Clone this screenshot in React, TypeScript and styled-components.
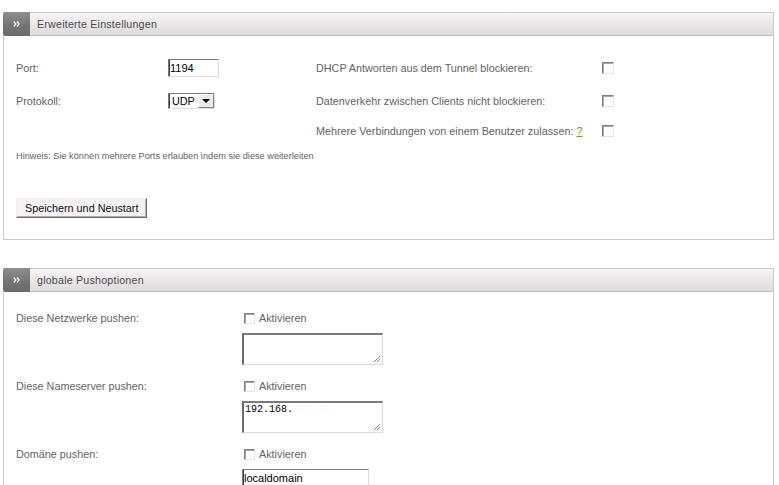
import React from "react";
import styled, { createGlobalStyle } from "styled-components";

const GlobalStyle = createGlobalStyle`
	html, body {
		margin: 0;
		padding: 0;
		background: #ffffff;
	}
	body {
		font-family: "Liberation Sans", Arial, sans-serif;
		font-size: 10.8px;
		color: #636363;
	}
`;

const Page = styled.div`
	padding: 12px 5px 0 3px;
	width: 771px;
`;

const Panel = styled.section`
	border-left: 1px solid #c8c8c8;
	border-right: 1px solid #c8c8c8;
	border-bottom: 1px solid #c8c8c8;
	margin-bottom: 28px;
`;

const PanelHeader = styled.header`
	display: flex;
	align-items: stretch;
	height: 22px;
	margin: 0 -1px;
	border: 1px solid #c8c8c8;
	border-bottom-color: #bcbcbc;
	background: linear-gradient(#f8f4f7, #e9e6e8 55%, #dedadd);
`;

const HeaderTab = styled.span`
	display: flex;
	align-items: center;
	justify-content: center;
	width: 27px;
	margin: -1px 0 -1px -1px;
	border-radius: 3px 0 0 3px;
	background: linear-gradient(#8e8e8e, #737373 60%, #6a6a6a);
`;

const HeaderTitle = styled.h2`
	margin: 0;
	padding-left: 7px;
	display: flex;
	align-items: center;
	font-size: 10.7px;
	font-weight: normal;
	color: #4c4c4c;
	letter-spacing: 0.2px;
`;

const SettingsBody = styled.div`
	padding: 15px 12px 21px 12px;
`;

const SettingsGrid = styled.div`
	display: grid;
	grid-template-columns: 152px 148px 286px 12px;
	grid-template-rows: 33px 33px 27px;
	align-items: center;
`;

const Label = styled.span`
	color: #636363;
	white-space: nowrap;
`;

const HelpLink = styled.a`
	color: #7a9a12;
	text-decoration: underline;
	margin-left: 3px;
`;

const Checkbox = styled.span<{ $size?: number }>`
	display: inline-block;
	box-sizing: border-box;
	width: ${(p) => p.$size ?? 12}px;
	height: ${(p) => p.$size ?? 12}px;
	background: #ffffff;
	border: 1px solid;
	border-color: #808080 #e4e4e4 #e4e4e4 #808080;
	box-shadow: inset 1px 1px 0 #a8a8a8;
	flex-shrink: 0;
`;

const TextInput = styled.span<{ $width: number }>`
	display: flex;
	align-items: center;
	box-sizing: border-box;
	width: ${(p) => p.$width}px;
	height: 18px;
	padding-left: 1px;
	background: #ffffff;
	border: 1px solid;
	border-color: #7a7a7a #dedede #dedede #7a7a7a;
	box-shadow: inset 1px 0 0 #404040;
	color: #000000;
	font-size: 11px;
`;

const SelectBox = styled.span`
	display: inline-flex;
	align-items: center;
	box-sizing: border-box;
	width: 47px;
	height: 16px;
	background: #ffffff;
	border: 1px solid;
	border-color: #7a7a7a #dedede #dedede #7a7a7a;
	box-shadow: inset 1px 0 0 #404040;
	color: #000000;
	padding-left: 3px;
	justify-content: space-between;
`;

const SelectArrow = styled.span`
	display: flex;
	align-items: center;
	justify-content: center;
	box-sizing: border-box;
	width: 16px;
	height: 14px;
	background: #ece9e8;
	border: 1px solid;
	border-color: #ffffff #808080 #808080 #ffffff;

	&::after {
		content: "";
		border-left: 4px solid transparent;
		border-right: 4px solid transparent;
		border-top: 4px solid #000000;
	}
`;

const Hint = styled.p`
	margin: 6px 0 0 0;
	font-size: 9.2px;
	line-height: 12px;
	color: #636363;
`;

const SubmitButton = styled.button`
	margin-top: 36px;
	height: 20px;
	padding: 0 8px;
	background: #f5f1f5;
	border: 1px solid;
	border-color: #f0f0f0 #6f6f6f #6f6f6f #f0f0f0;
	box-shadow: inset -1px -1px 0 #b0b0b0;
	font-family: "Liberation Sans", Arial, sans-serif;
	font-size: 10.8px;
	color: #111111;
	cursor: pointer;
`;

const PushBody = styled.div`
	padding: 17px 12px 0 12px;
`;

const PushRow = styled.div`
	display: grid;
	grid-template-columns: 226px auto;
	margin-bottom: 12px;
`;

const PushLabel = styled.span`
	height: 18px;
	line-height: 18px;
	color: #636363;
`;

const PushControls = styled.div`
	display: flex;
	flex-direction: column;
	align-items: flex-start;
`;

const ActivateLine = styled.label`
	display: flex;
	align-items: center;
	gap: 4px;
	height: 18px;
	padding-left: 2px;
	color: #636363;
`;

const TextArea = styled.div`
	box-sizing: border-box;
	width: 141px;
	height: 32px;
	margin-top: 6px;
	position: relative;
	background: #ffffff;
	border-top: 2px solid #7a7a7a;
	border-left: 2px solid #6a6a6a;
	border-right: 1px solid #dcdcdc;
	border-bottom: 1px solid #dcdcdc;
	font-family: "Liberation Mono", "DejaVu Sans Mono", monospace;
	font-size: 10px;
	line-height: 12px;
	color: #000000;
	padding: 1px 1px;
`;

const ResizeGrip = styled.svg`
	position: absolute;
	right: 1px;
	bottom: 1px;
`;

const Obscured = styled.span`
	color: #fafafa;
`;

const DomainInput = styled(TextInput)`
	margin-top: 6px;
`;

const Grip = () => (
	<ResizeGrip width="8" height="8" viewBox="0 0 8 8">
		<path d="M7 1L1 7M7 4L4 7" stroke="#8a8a8a" strokeWidth="1" />
	</ResizeGrip>
);

const Chevrons = () => (
	<svg width="7" height="6" viewBox="0 0 7 6">
		<path
			d="M0.8 0.5L2.8 3L0.8 5.5M4 0.5L6 3L4 5.5"
			stroke="#ffffff"
			strokeWidth="1.3"
			fill="none"
		/>
	</svg>
);

const rightOptions = [
	"DHCP Antworten aus dem Tunnel blockieren:",
	"Datenverkehr zwischen Clients nicht blockieren:",
];

const App: React.FunctionComponent = () => {
	return (
		<>
			<GlobalStyle />
			<Page>
				<Panel>
					<PanelHeader>
						<HeaderTab>
							<Chevrons />
						</HeaderTab>
						<HeaderTitle>Erweiterte Einstellungen</HeaderTitle>
					</PanelHeader>
					<SettingsBody>
						<SettingsGrid>
							<Label>Port:</Label>
							<TextInput $width={51}>1194</TextInput>
							<Label>{rightOptions[0]}</Label>
							<Checkbox />

							<Label>Protokoll:</Label>
							<span>
								<SelectBox>
									UDP
									<SelectArrow />
								</SelectBox>
							</span>
							<Label>{rightOptions[1]}</Label>
							<Checkbox />

							<span />
							<span />
							<Label>
								Mehrere Verbindungen von einem Benutzer zulassen:
								<HelpLink href="#">?</HelpLink>
							</Label>
							<Checkbox />
						</SettingsGrid>
						<Hint>
							Hinweis: Sie können mehrere Ports erlauben indem sie diese
							weiterleiten
						</Hint>
						<SubmitButton>Speichern und Neustart</SubmitButton>
					</SettingsBody>
				</Panel>

				<Panel>
					<PanelHeader>
						<HeaderTab>
							<Chevrons />
						</HeaderTab>
						<HeaderTitle>globale Pushoptionen</HeaderTitle>
					</PanelHeader>
					<PushBody>
						<PushRow>
							<PushLabel>Diese Netzwerke pushen:</PushLabel>
							<PushControls>
								<ActivateLine>
									<Checkbox $size={11} />
									Aktivieren
								</ActivateLine>
								<TextArea>
									<Grip />
								</TextArea>
							</PushControls>
						</PushRow>
						<PushRow>
							<PushLabel>Diese Nameserver pushen:</PushLabel>
							<PushControls>
								<ActivateLine>
									<Checkbox $size={11} />
									Aktivieren
								</ActivateLine>
								<TextArea>
									192.168.<Obscured>200.222</Obscured>
									<Grip />
								</TextArea>
							</PushControls>
						</PushRow>
						<PushRow>
							<PushLabel>Domäne pushen:</PushLabel>
							<PushControls>
								<ActivateLine>
									<Checkbox $size={11} />
									Aktivieren
								</ActivateLine>
								<DomainInput $width={127}>localdomain</DomainInput>
							</PushControls>
						</PushRow>
					</PushBody>
				</Panel>
			</Page>
		</>
	);
};

export default App;
